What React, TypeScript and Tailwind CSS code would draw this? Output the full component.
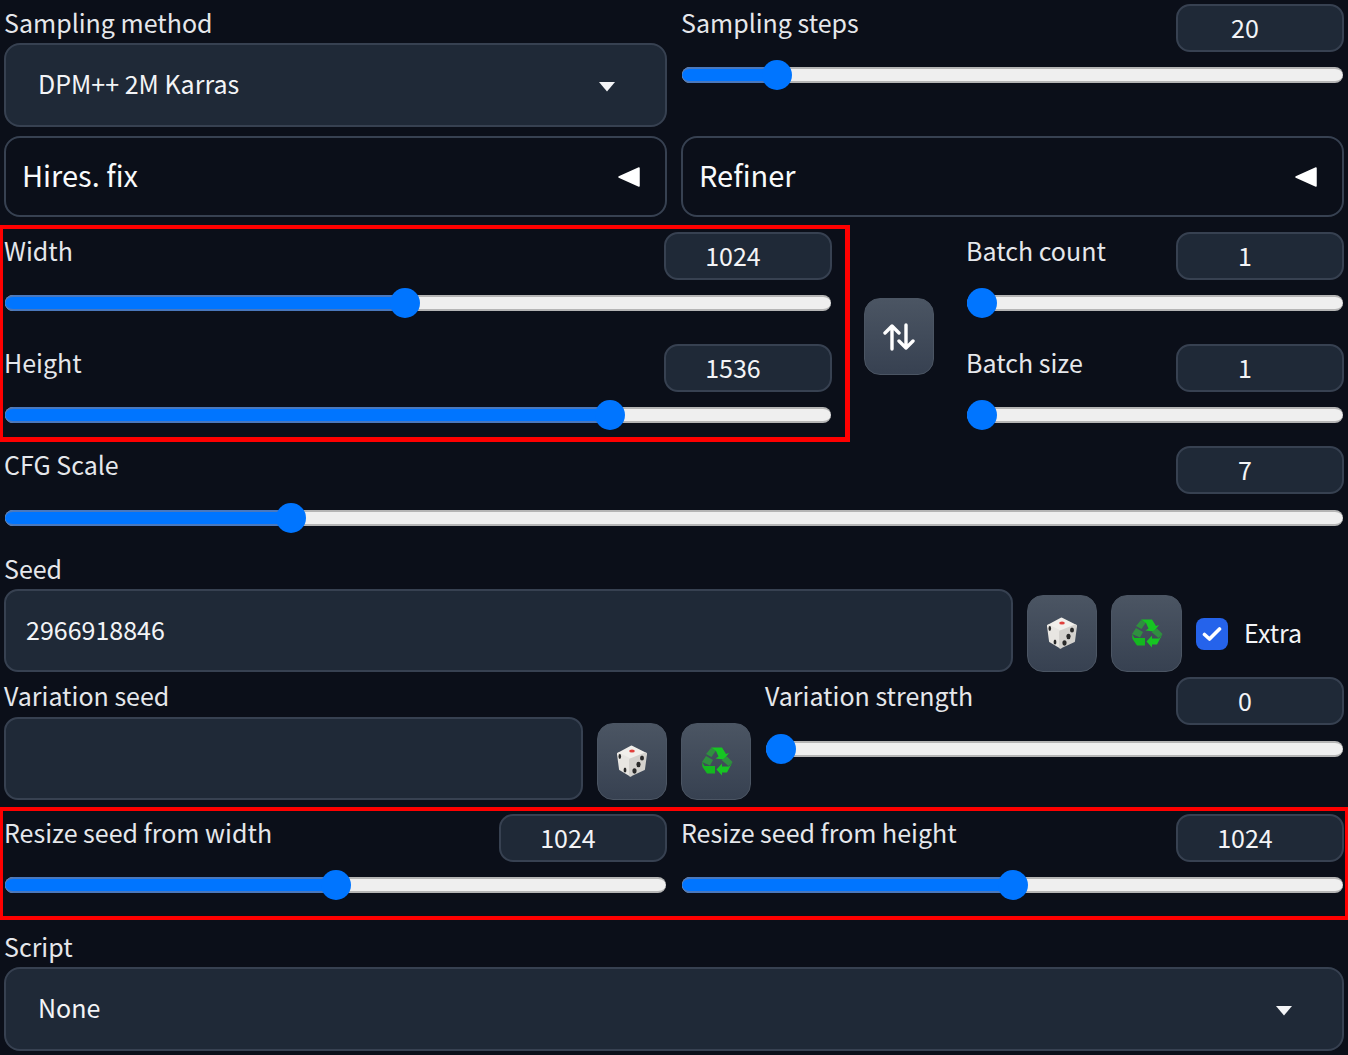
// Sampling settings panel
const fontStack = `"Noto Sans CJK SC", "Noto Sans", sans-serif`

function Track({ value }: { value: number }) {
  return (
    <div className="relative mx-[1px] h-[16px] rounded-full border-y-[2px] border-[#b5b5b5] bg-[#efefef]">
      <div
        className="absolute -top-[2px] left-0 h-[16px] rounded-l-full border-y-[2px] border-[#4a78bd] bg-[#0075ff]"
        style={{ width: `calc((100% - 30px) * ${value} + 15px)` }}
      />
      <div
        className="absolute -top-[9px] h-[30px] w-[30px] rounded-full bg-[#0075ff]"
        style={{ left: `calc((100% - 30px) * ${value})` }}
      />
    </div>
  )
}

function NumberBox({ value }: { value: string }) {
  return (
    <div className="flex h-[48px] w-[168px] shrink-0 items-center justify-center rounded-[14px] border-[2px] border-[#374151] bg-[#1f2937] pr-[30px] text-[25px] text-[#f3f4f6]">
      {value}
    </div>
  )
}

function SliderField({
  label,
  value,
  pos,
  className,
  trackClassName = "mt-[15px]",
}: {
  label: string
  value: string
  pos: number
  className?: string
  trackClassName?: string
}) {
  return (
    <div className={className}>
      <div className="flex h-[48px] items-start justify-between">
        <span className="flex h-[40px] items-center pb-[2px] text-[25px] whitespace-nowrap text-[#e5e7eb]">{label}</span>
        <NumberBox value={value} />
      </div>
      <div className={trackClassName}>
        <Track value={pos} />
      </div>
    </div>
  )
}

function Select({ value }: { value: string }) {
  return (
    <div className="flex h-[84px] items-center justify-between rounded-[16px] border-[2px] border-[#374151] bg-[#1f2937] pr-[50px] pl-[32px] text-[25px] text-[#f3f4f6]">
      <span className="pb-[2px]">{value}</span>
      <svg className="mt-[4px]" width="16" height="10" viewBox="0 0 16 10">
        <polygon points="0,0 16,0 8,9.5" fill="#f3f4f6" />
      </svg>
    </div>
  )
}

function Accordion({ label }: { label: string }) {
  return (
    <div className="flex h-[81px] flex-1 items-center justify-between rounded-[16px] border-[2px] border-[#374151] pr-[25px] pl-[16px] text-[29px] text-[#f9fafb]">
      <span className="pb-[4px]">{label}</span>
      <svg width="22" height="20" viewBox="0 0 22 20">
        <polygon points="21,1 21,19 1,10" fill="#fff" stroke="#fff" strokeWidth="1.5" strokeLinejoin="round" />
      </svg>
    </div>
  )
}

function Dice() {
  return (
    <svg width="33" height="33" viewBox="0 0 33 33" strokeLinejoin="round">
      <path d="M2.5 9 15.5 2 29.5 9 14.5 15Z" fill="#f1efeb" stroke="#f1efeb" strokeWidth="3" />
      <path d="M2.5 9 14.5 15 14.5 30 4.5 24Z" fill="#e8e6e2" stroke="#e8e6e2" strokeWidth="3" />
      <path d="M14.5 15 29.5 9 27.5 24 14.5 30Z" fill="#d4d2ce" stroke="#d4d2ce" strokeWidth="3" />
      <ellipse cx="16" cy="6" rx="2.8" ry="1.5" fill="#e0403c" />
      <ellipse cx="3.8" cy="11.5" rx="1.3" ry="2.4" fill="#2a2a2a" />
      <ellipse cx="9" cy="25" rx="1.4" ry="2.6" fill="#2a2a2a" />
      <ellipse cx="26" cy="13" rx="2" ry="2.6" fill="#2a2a2a" />
      <ellipse cx="22.5" cy="19.5" rx="2.1" ry="2.7" fill="#2a2a2a" />
      <ellipse cx="18.5" cy="26" rx="2.1" ry="2.7" fill="#2a2a2a" />
    </svg>
  )
}

function Recycle() {
  return (
    <svg className="ml-[2px]" width="31" height="29" viewBox="0 0 31 29">
      <path d="M4 7 9 1 14 3.5 9.5 10Z" fill="#2f8f3f" />
      <path d="M9 .5H20L24 7 27 6 22 12.5 13.5 11.5 16.5 9.5 14 4Z" fill="#16c622" />
      <path d="M0 15 4 9 11 13 8 18.5Z" fill="#2f8f3f" />
      <path d="M0 15 2.5 19 13 19V26.5H5L0.5 20Z" fill="#14b820" />
      <path d="M19.5 13 25 9.5 30.5 15 26.5 19Z" fill="#2f8f3f" />
      <path d="M30.5 15 25 25.5H20V28.5L14.5 22.5 20 16.5V19.5H27Z" fill="#16c622" />
    </svg>
  )
}

function IconButton({ children, className }: { children: React.ReactNode; className?: string }) {
  return (
    <div className={`flex h-[77px] w-[70px] shrink-0 items-center justify-center rounded-[16px] border-[1px] border-[#4b5563] bg-gradient-to-b from-[#4b5563] to-[#374151] ${className ?? ""}`}>
      {children}
    </div>
  )
}

function TextInput({ value, className }: { value?: string; className?: string }) {
  return (
    <div className={`flex h-[83px] items-center rounded-[14px] border-[2px] border-[#374151] bg-[#1f2937] pb-[2px] pl-[20px] text-[25px] text-[#f3f4f6] ${className ?? ""}`}>
      {value}
    </div>
  )
}

function FieldLabel({ children, className }: { children: React.ReactNode; className?: string }) {
  return <div className={`flex h-[39px] items-center pb-[2px] text-[25px] whitespace-nowrap text-[#e5e7eb] ${className ?? ""}`}>{children}</div>
}

export default function App() {
  return (
    <div className="h-[1055px] w-[1348px] overflow-hidden bg-[#0b0f19]" style={{ fontFamily: fontStack }}>
      {/* Sampling */}
      <div className="flex h-[127px] gap-[14px] px-[4px]">
        <div className="flex-1">
          <div className="flex h-[43px] items-center pt-[3px] text-[25px] text-[#e5e7eb]">Sampling method</div>
          <Select value="DPM++ 2M Karras" />
        </div>
        <SliderField className="flex-1 pt-[4px]" label="Sampling steps" value="20" pos={0.127} />
      </div>

      <div className="mt-[9px] flex gap-[14px] px-[4px]">
        <Accordion label="Hires. fix" />
        <Accordion label="Refiner" />
      </div>

      {/* Size */}
      <div className="mt-[8px] flex h-[217px]">
        <div className="w-[850px] shrink-0 border-t-[4px] border-r-[5px] border-b-[5px] border-l-[3px] border-[#ff0000] pt-[3px] pr-[13px] pl-[1px]">
          <SliderField className="h-[112px]" label="Width" value="1024" pos={0.484} />
          <SliderField label="Height" value="1536" pos={0.741} />
        </div>
        <IconButton className="mt-[73px] ml-[14px]">
          <svg width="32" height="28" viewBox="0 0 32 28" fill="none" stroke="#fff" strokeWidth="3.4" strokeLinecap="round" strokeLinejoin="round">
            <path d="M9 26V3M2 10l7-7 7 7" />
            <path d="M23 2v23M16 18l7 7 7-7" />
          </svg>
        </IconButton>
        <div className="mt-[7px] ml-[32px] flex-1 pr-[4px]">
          <SliderField className="h-[112px]" label="Batch count" value="1" pos={0} />
          <SliderField label="Batch size" value="1" pos={0} />
        </div>
      </div>

      <SliderField className="mt-[4px] h-[104px] px-[4px]" trackClassName="mt-[16px]" label="CFG Scale" value="7" pos={0.207} />

      {/* Seed */}
      <div className="flex h-[122px] items-end px-[4px]">
        <div className="w-[1009px] shrink-0">
          <FieldLabel>Seed</FieldLabel>
          <TextInput value="2966918846" />
        </div>
        <IconButton className="ml-[14px]">
          <Dice />
        </IconButton>
        <IconButton className="ml-[14px] w-[71px]">
          <Recycle />
        </IconButton>
        <div className="flex h-[77px] items-center pl-[14px]">
          <div className="flex h-[32px] w-[32px] items-center justify-center rounded-[8px] bg-[#2563eb]">
            <svg width="20" height="16" viewBox="0 0 20 16" fill="none" stroke="#fff" strokeWidth="3.6" strokeLinecap="round" strokeLinejoin="round">
              <path d="M2.5 8.5 7.5 13 17.5 3" />
            </svg>
          </div>
          <span className="ml-[16px] pb-[2px] text-[25px] text-[#f3f4f6]">Extra</span>
        </div>
      </div>

      <div className="mt-[5px] flex h-[123px] items-end px-[4px]">
        <div className="w-[579px] shrink-0">
          <div className="flex h-[40px] items-center pb-[2px] text-[25px] text-[#e5e7eb]">Variation seed</div>
          <TextInput />
        </div>
        <IconButton className="ml-[14px]">
          <Dice />
        </IconButton>
        <IconButton className="ml-[14px]">
          <Recycle />
        </IconButton>
        <SliderField className="ml-[14px] h-[123px] flex-1" trackClassName="mt-[16px]" label="Variation strength" value="0" pos={0} />
      </div>

      {/* Seed resize */}
      <div className="mt-[7px] flex h-[113px] gap-[14px] border-x-[3px] border-y-[4px] border-[#ff0000] px-[1px] pt-[3px]">
        <SliderField className="flex-1" label="Resize seed from width" value="1024" pos={0.5} />
        <SliderField className="flex-1" label="Resize seed from height" value="1024" pos={0.5} />
      </div>

      <div className="mt-[8px] px-[4px]">
        <FieldLabel>Script</FieldLabel>
        <Select value="None" />
      </div>
    </div>
  )
}
